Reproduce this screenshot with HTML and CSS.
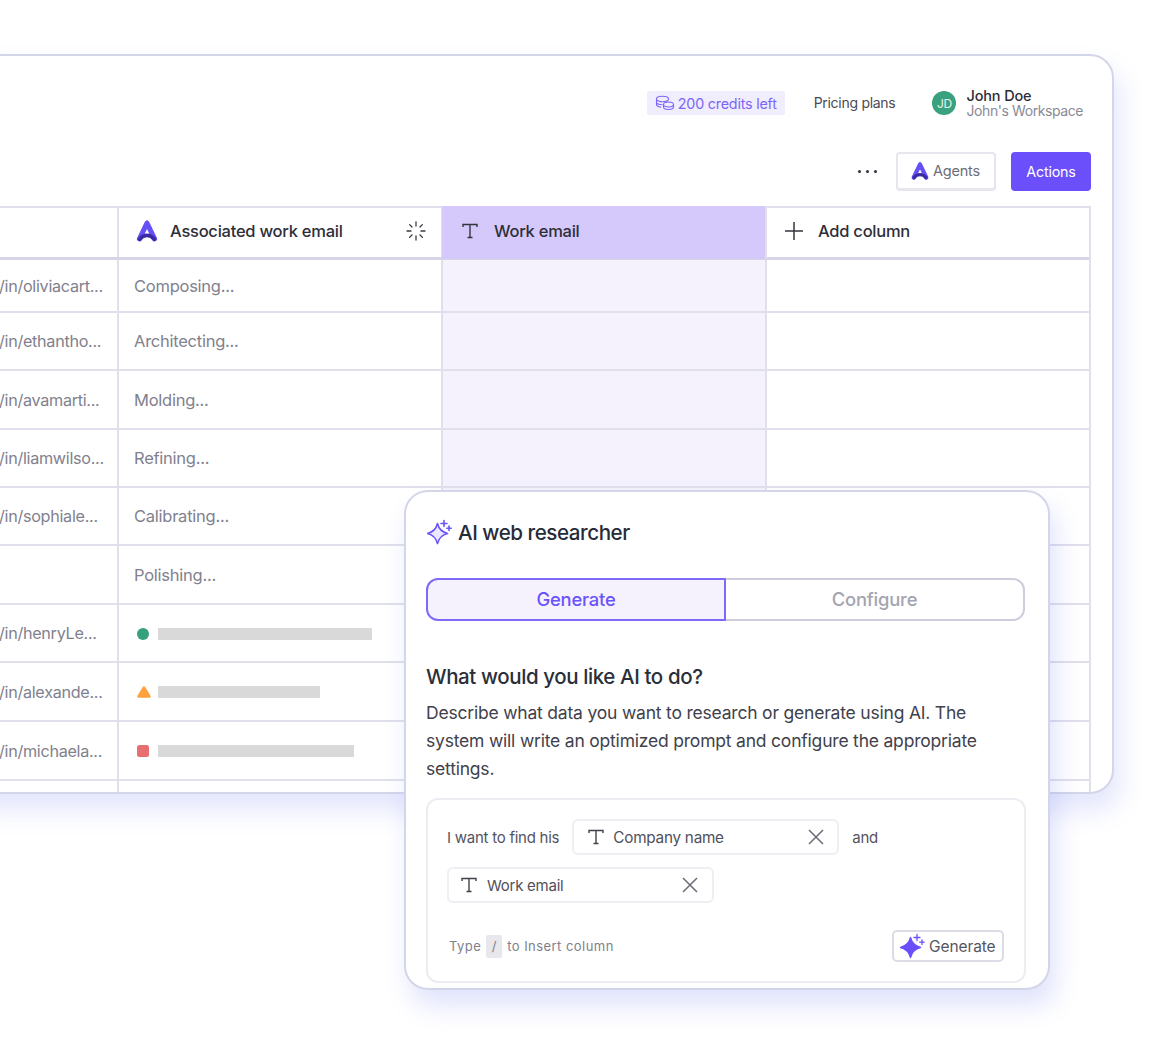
FILE: index.html
```html
<!DOCTYPE html>
<html lang="en">
<head>
<meta charset="utf-8">
<title>AI web researcher</title>
<link rel="stylesheet" href="styles.css">
</head>
<body>
<svg class="defs" width="0" height="0" aria-hidden="true">
  <defs>
    <symbol id="logo" viewBox="0 0 20 20">
      <path d="M10 3.500L3.700 16.500M10 3.500L16.300 16.500" fill="none" stroke="#6450f5" stroke-width="4.200" stroke-linecap="round"/>
      <path d="M4 16.800C7 12.600 13 12.600 16 16.800" fill="none" stroke="#3b2aa6" stroke-width="3.200" stroke-linecap="round"/>
    </symbol>
    <symbol id="tee" viewBox="0 0 18 18">
      <path d="M2 5V2.500h14V5M9 2.500v13M6.500 15.500h5" fill="none" stroke="currentColor" stroke-width="1.400"/>
    </symbol>
    <symbol id="cross" viewBox="0 0 18 18">
      <path d="M2 2l14 14M16 2L2 16" fill="none" stroke="currentColor" stroke-width="1.500"/>
    </symbol>
    <symbol id="spark" viewBox="0 0 26 26">
      <path d="M10.500 4.500Q12.500 12.500 20.500 14.500Q12.500 16.500 10.500 24.500Q8.500 16.500 .5 14.500Q8.500 12.500 10.500 4.500z" stroke-linejoin="round"/>
      <path d="M17 1.500v6M14 4.500h6M22 7v4.400M19.800 9.200h4.400" fill="none" stroke-linecap="round"/>
    </symbol>
  </defs>
</svg>

<main class="stage">
  <section class="card">
    <header class="topbar">
      <div class="credits">
        <svg class="coins" viewBox="0 0 20 16"><g fill="none" stroke="currentColor" stroke-width="1.100"><ellipse cx="7.500" cy="4" rx="6" ry="2.700"/><path d="M1.500 4v3c0 1.500 2.700 2.700 6 2.700M1.500 7v2.500c0 1.300 2 2.300 4.500 2.600"/><ellipse cx="13.500" cy="9.500" rx="5" ry="2.500"/><path d="M8.500 9.500v2.500c0 1.400 2.200 2.500 5 2.500s5-1.100 5-2.500V9.500"/></g></svg>
        <span>200 credits left</span>
      </div>
      <span class="pricing">Pricing plans</span>
      <div class="user">
        <div class="avatar">JD</div>
        <div class="who">
          <span class="name">John Doe</span>
          <span class="workspace">John's Workspace</span>
        </div>
      </div>
    </header>

    <div class="toolbar">
      <span class="more"><i></i><i></i><i></i></span>
      <button class="btn-agents"><svg class="ic-20"><use href="#logo"/></svg>Agents</button>
      <button class="btn-actions">Actions</button>
    </div>

    <div class="table">
      <div class="row head">
        <div class="cell c1"></div>
        <div class="cell c2">
          <svg class="ic-24"><use href="#logo"/></svg>
          <span class="hlabel">Associated work email</span>
          <svg class="spinner" viewBox="0 0 20 20"><g stroke="#3a3a44" stroke-width="1.300" stroke-linecap="round"><path d="M10 1v4M10 15v4M1 10h4M15 10h4M3.600 3.600l2.400 2.400M14 14l2.400 2.400M16.400 3.600L14 6M6 14l-2.400 2.400"/></g></svg>
        </div>
        <div class="cell c3 hl-head">
          <svg class="ic-tee"><use href="#tee"/></svg>
          <span class="hlabel">Work email</span>
        </div>
        <div class="cell c4">
          <svg class="ic-plus" viewBox="0 0 18 18"><path d="M9 0v18M0 9h18" stroke="currentColor" stroke-width="1.500"/></svg>
          <span class="hlabel">Add column</span>
        </div>
      </div>
      <div class="row h53"><div class="cell c1">/in/oliviacart...</div><div class="cell c2">Composing...</div><div class="cell c3 hl"></div><div class="cell c4"></div></div>
      <div class="row h58"><div class="cell c1">/in/ethantho...</div><div class="cell c2">Architecting...</div><div class="cell c3 hl"></div><div class="cell c4"></div></div>
      <div class="row h59"><div class="cell c1">/in/avamarti...</div><div class="cell c2">Molding...</div><div class="cell c3 hl"></div><div class="cell c4"></div></div>
      <div class="row h58"><div class="cell c1">/in/liamwilso...</div><div class="cell c2">Refining...</div><div class="cell c3 hl"></div><div class="cell c4"></div></div>
      <div class="row h58"><div class="cell c1">/in/sophiale...</div><div class="cell c2">Calibrating...</div><div class="cell c3 hl"></div><div class="cell c4"></div></div>
      <div class="row h59"><div class="cell c1"></div><div class="cell c2">Polishing...</div><div class="cell c3"></div><div class="cell c4"></div></div>
      <div class="row h58"><div class="cell c1">/in/henryLe...</div><div class="cell c2"><span class="dot circle"></span><span class="bar" style="width:214px"></span></div><div class="cell c3"></div><div class="cell c4"></div></div>
      <div class="row h59"><div class="cell c1">/in/alexande...</div><div class="cell c2"><svg class="dot" viewBox="0 0 14 12"><path d="M7 1.500L12.500 10.500H1.500z" fill="#ffa23e" stroke="#ffa23e" stroke-width="2.500" stroke-linejoin="round"/></svg><span class="bar" style="width:162px"></span></div><div class="cell c3"></div><div class="cell c4"></div></div>
      <div class="row h59"><div class="cell c1">/in/michaela...</div><div class="cell c2"><span class="dot square"></span><span class="bar" style="width:196px"></span></div><div class="cell c3"></div><div class="cell c4"></div></div>
      <div class="row last"><div class="cell c1"></div><div class="cell c2"></div><div class="cell c3"></div><div class="cell c4"></div></div>
    </div>
  </section>

  <section class="panel">
    <h2 class="panel-title">
      <svg class="spark-outline"><use href="#spark"/></svg>
      AI web researcher
    </h2>
    <div class="tabs">
      <div class="tab active">Generate</div>
      <div class="tab">Configure</div>
    </div>
    <h3 class="question">What would you like AI to do?</h3>
    <p class="desc">Describe what data you want to research or generate using AI. The system will write an optimized prompt and configure the appropriate settings.</p>
    <div class="prompt">
      <div class="prompt-lines">
        <span class="ptext">I want to find his</span>
        <div class="chip chip-a"><svg class="ic-chip"><use href="#tee"/></svg><span>Company name</span><svg class="ic-x"><use href="#cross"/></svg></div>
        <span class="ptext">and</span>
        <div class="chip chip-b"><svg class="ic-chip"><use href="#tee"/></svg><span>Work email</span><svg class="ic-x"><use href="#cross"/></svg></div>
      </div>
      <div class="prompt-foot">
        <div class="hint">Type <kbd>/</kbd> to Insert column</div>
        <button class="btn-generate"><svg class="spark-solid"><use href="#spark"/></svg>Generate</button>
      </div>
    </div>
  </section>
</main>
</body>
</html>
```
FILE: styles.css
```css
* { box-sizing: border-box; }
html, body { margin: 0; padding: 0; background: #fff; }
body { font-family: "Inter", "Open Sans", sans-serif; color: #34343e; }
.defs { position: absolute; }
button { font-family: inherit; cursor: pointer; }

.stage {
  position: relative;
  width: 1168px;
  height: 1056px;
  overflow: hidden;
  padding-top: 54px;
}

.card {
  width: 1154px;
  height: 740px;
  margin-left: -40px;
  padding-right: 21px;
  background: #fff;
  border: 2px solid #d3d6e8;
  border-radius: 24px;
  box-shadow: 6px 16px 26px rgba(100, 115, 240, .18);
  overflow: hidden;
}

.topbar {
  display: flex;
  align-items: center;
  justify-content: flex-end;
  height: 36px;
  margin-top: 29px;
  padding-right: 8px;
  font-size: 14px;
  letter-spacing: -.2px;
}
.credits {
  display: flex;
  align-items: center;
  gap: 3px;
  height: 24px;
  padding: 0 8px;
  background: #f0edfd;
  border-radius: 2px;
  color: #7b66f8;
  font-size: 14.300px;
}
.coins { width: 20px; height: 16px; }
.pricing { margin-left: 29px; color: #4a4a54; letter-spacing: -.28px; padding-bottom: 2px; }
.user { display: flex; align-items: center; gap: 10px; margin-left: 37px; }
.avatar {
  width: 24px; height: 24px;
  border-radius: 50%;
  background: #3aa17e;
  color: #e4f4ee;
  font-size: 12px;
  display: flex; align-items: center; justify-content: center;
}
.who { display: flex; flex-direction: column; line-height: 15px; }
.name { color: #2d2d36; font-weight: 450; font-size: 14.500px; letter-spacing: -.15px; }
.workspace { color: #8a8a96; letter-spacing: -.42px; }

.toolbar {
  display: flex;
  align-items: center;
  justify-content: flex-end;
  gap: 15px;
  height: 39px;
  margin-top: 31px;
}
.more { display: flex; gap: 5px; margin-right: 4px; }
.more i { width: 3px; height: 3px; border-radius: 50%; background: #34343e; }
.btn-agents {
  display: flex; align-items: center; gap: 3px;
  width: 100px; height: 39px;
  padding: 0 12px 1px;
  background: #fff;
  border: 2px solid #e6e6ee;
  border-bottom-width: 3px;
  border-radius: 4px;
  font-size: 14.500px;
  letter-spacing: -.2px;
  color: #6d6d78;
}
.btn-actions {
  width: 80px; height: 39px;
  background: #6a4ffb;
  border: 0;
  border-radius: 4px;
  color: #fff;
  font-size: 14.300px;
  letter-spacing: -.2px;
}
.ic-20 { width: 20px; height: 20px; flex: none; }

.table {
  margin-top: 15px;
  border: solid #e0e0ec;
  border-width: 2px 2px 0 0;
  font-size: 16.500px;
  letter-spacing: -.25px;
  color: #81818e;
}
.row {
  display: grid;
  grid-template-columns: 157px 324px 324px 1fr;
  border-bottom: 2px solid #e0e0ec;
}
.row.head { height: 52px; border-bottom: 3px solid #d5d5e5; color: #2e2e38; }
.h53 { height: 53px; }
.h58 { height: 58px; }
.h59 { height: 59px; }
.row.last { height: 13px; border: 0; }
.cell {
  display: flex;
  align-items: center;
  min-width: 0;
  white-space: nowrap;
  overflow: hidden;
  padding-left: 15px;
  border-right: 2px solid #e0e0ec;
}
.cell.c1 { padding-left: 37px; font-size: 16.200px; letter-spacing: -.3px; }
.cell.c4 { border-right: 0; }
.cell.hl { background: #f5f2fe; }
.head .cell { padding: 0 0 3px 16px; }
.head .cell.hl-head {
  margin: -2px 0 -2px -1px;
  padding-left: 17px;
  background: #d5c9fb;
}
.hlabel { font-weight: 450; }
.ic-24 { width: 24px; height: 24px; margin-right: 11px; flex: none; }
.c2 .hlabel { flex: 1; }
.spinner { width: 20px; height: 20px; margin-right: 15px; flex: none; }
.ic-tee { width: 18px; height: 18px; margin: 0 15px 0 2px; color: #34343e; flex: none; }
.ic-plus { width: 18px; height: 18px; margin: 0 15px 0 2px; color: #34343e; flex: none; }

.dot { width: 14px; height: 12px; margin: 1px 7px 0 3px; flex: none; }
.dot.circle { width: 12px; height: 12px; margin: 1px 9px 0 3px; border-radius: 50%; background: #36a07c; }
.dot.square { width: 12px; height: 12px; margin: 1px 9px 0 3px; border-radius: 2.500px; background: #e86f70; }
.bar { height: 12px; margin-top: 1px; background: #d9d9d9; }

.panel {
  position: absolute;
  left: 404px;
  top: 490px;
  width: 646px;
  height: 500px;
  padding: 0 22px 0 20px;
  background: #fff;
  border: 2px solid #d3d6e8;
  border-radius: 24px;
  box-shadow: 6px 16px 26px rgba(100, 115, 240, .2);
}
.panel-title {
  display: flex;
  align-items: center;
  gap: 5px;
  height: 26px;
  margin: 27px 0 0;
  font-size: 20.600px;
  font-weight: 450;
  letter-spacing: -.45px;
  color: #262b38;
}
.spark-outline { width: 26px; height: 26px; margin-left: 1px; flex: none; fill: #ece8ff; stroke: #6a53fa; stroke-width: 1.600; }
.spark-solid { width: 26px; height: 26px; flex: none; fill: #6a4ffb; stroke: #6a4ffb; stroke-width: 1.300; }

.tabs { display: flex; height: 43px; margin: 33px 1px 0 0; font-size: 18.400px; }
.tab {
  flex: 1;
  display: flex; align-items: center; justify-content: center;
  padding-bottom: 2px;
  border: 2px solid #cdcddc;
  border-left: 0;
  border-radius: 0 12px 12px 0;
  color: #a4a4b0;
  font-weight: 450;
  letter-spacing: -.2px;
}
.tab.active {
  flex: 0 0 300px;
  border: 2px solid #7f69f8;
  border-radius: 12px 0 0 12px;
  background: #f5f2fe;
  color: #6a53fa;
}
.question {
  margin: 43px 0 0;
  font-size: 20.500px;
  line-height: 26px;
  font-weight: 450;
  letter-spacing: -.4px;
  color: #2b2f3a;
}
.desc {
  margin: 9px 0 0;
  font-size: 17.500px;
  line-height: 28px;
  letter-spacing: -.2px;
  color: #3f414c;
}
.prompt {
  height: 185px;
  margin-top: 15px;
  padding: 19px 20px 0 19px;
  border: 2px solid #ecedf2;
  border-radius: 12px;
}
.prompt-lines {
  display: flex;
  flex-wrap: wrap;
  align-items: center;
  gap: 12px 13px;
  font-size: 15px;
  letter-spacing: -.25px;
}
.ptext { color: #54545e; }
.chip {
  display: flex;
  align-items: center;
  height: 36px;
  border: 2px solid #eeeef3;
  border-radius: 6px;
  color: #50505b;
}
.chip-a { width: 267px; padding-left: 13px; font-size: 15.300px; }
.chip-b { width: 267px; padding-left: 11px; }
.chip span { flex: 1; }
.ic-chip { width: 18px; height: 18px; margin-right: 8px; flex: none; color: #42424c; }
.chip-b .ic-chip { margin-right: 9px; }
.ic-x { width: 18px; height: 18px; margin-right: 13px; flex: none; color: #6a6a78; }
.chip-a .ic-x { margin-right: 12px; }

.prompt-foot {
  display: flex;
  align-items: center;
  justify-content: space-between;
  margin-top: 27px;
  padding-left: 2px;
}
.hint {
  display: flex; align-items: center; gap: 5px;
  font-size: 13px;
  letter-spacing: .45px;
  color: #80808c;
}
kbd {
  display: flex; align-items: center; justify-content: center;
  width: 16px; height: 23px;
  background: #e7e7ec;
  border-radius: 2px;
  font-family: inherit;
}
.btn-generate {
  display: flex; align-items: center; gap: 3px;
  width: 112px; height: 32px;
  padding: 0 0 0 6px;
  background: #fff;
  border: 2px solid #dcdce6;
  border-radius: 5px;
  font-size: 15.500px;
  letter-spacing: -.1px;
  color: #55555f;
}
```
